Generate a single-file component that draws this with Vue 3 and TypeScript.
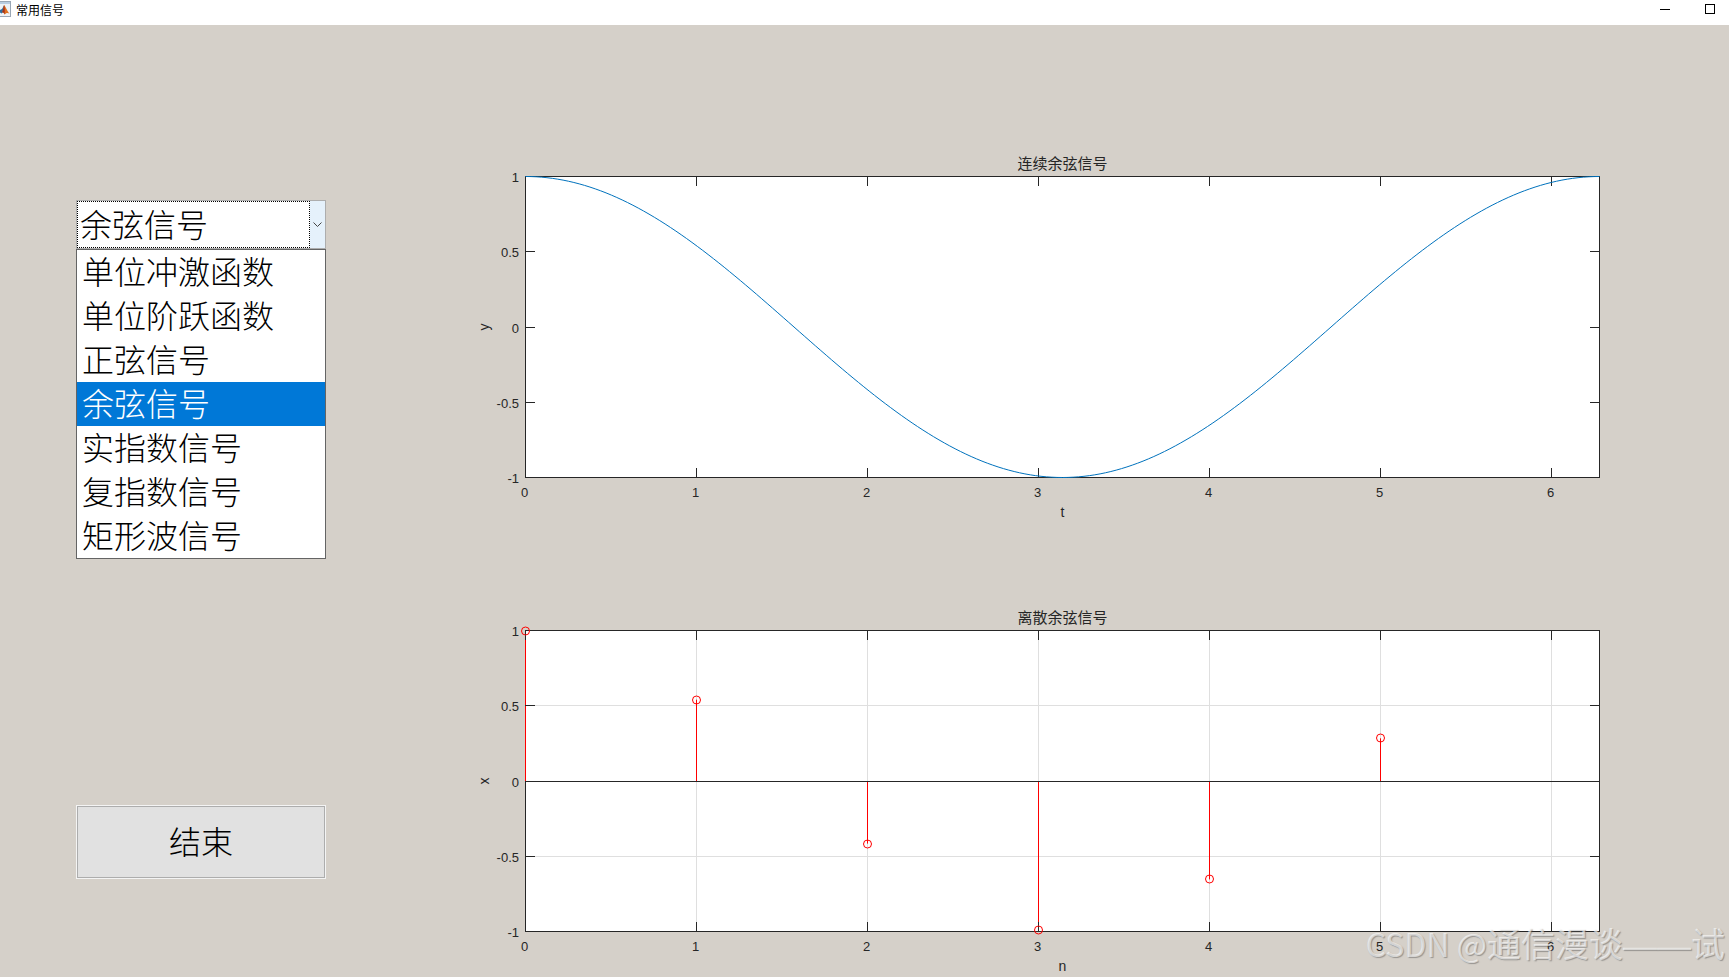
<script setup lang="ts">
import { computed, onBeforeUnmount, onMounted, ref } from 'vue'

interface Chart {
  id: string
  title: string
  xLabel: string
  yLabel: string
  discrete: boolean
}

const signals = [
  '单位冲激函数',
  '单位阶跃函数',
  '正弦信号',
  '余弦信号',
  '实指数信号',
  '复指数信号',
  '矩形波信号',
]
const selected = ref('余弦信号')

const charts: Chart[] = [
  { id: 'continuous', title: '连续余弦信号', xLabel: 't', yLabel: 'y', discrete: false },
  { id: 'discrete', title: '离散余弦信号', xLabel: 'n', yLabel: 'x', discrete: true },
]

const X_MAX = Math.PI * 2
const TICK = 10
const xTicks = [0, 1, 2, 3, 4, 5, 6]
const yTicks = [1, 0.5, 0, -0.5, -1]
const samples = [0, 1, 2, 3, 4, 5]

const plots = ref<SVGSVGElement[]>([])
const width = ref(1075)
const height = ref(302)

// Lines are centred on half pixels so that one-pixel strokes stay sharp.
const right = computed(() => width.value - 0.5)
const bottom = computed(() => height.value - 0.5)
const rawX = (v: number) => 0.5 + (v / X_MAX) * (width.value - 1)
const rawY = (v: number) => 0.5 + ((1 - v) / 2) * (height.value - 1)
const px = (v: number) => Math.floor(rawX(v)) + 0.5
const py = (v: number) => Math.floor(rawY(v)) + 0.5

const curve = computed(() =>
  Array.from({ length: 201 }, (_, i) => {
    const t = (i / 200) * X_MAX
    return `${rawX(t).toFixed(2)},${rawY(Math.cos(t)).toFixed(2)}`
  }).join(' '),
)

let observer: ResizeObserver | undefined

function measure() {
  const first = plots.value[0]
  if (!first) return
  const box = first.getBoundingClientRect()
  width.value = Math.round(box.width)
  height.value = Math.round(box.height)
}

onMounted(() => {
  measure()
  observer = new ResizeObserver(measure)
  if (plots.value[0]) observer.observe(plots.value[0])
})
onBeforeUnmount(() => observer?.disconnect())
</script>

<template>
  <div class="window" lang="zh-CN">
    <header class="titlebar">
      <svg class="app-icon" width="11" height="16" viewBox="0 0 11 16" aria-hidden="true">
        <rect x="-5" y="0.5" width="15.5" height="15" fill="#eef2f6" stroke="#9aa7b5" />
        <rect x="-5" y="1" width="15" height="2" fill="#b9cde0" />
        <path d="M0 9 L2 8 L4 4.500 L4.500 10 L1.500 12.500 L0 11.500Z" fill="#2f6f9f" />
        <path d="M4 4 C5.500 5 7 10 9.500 12.500 C7.500 11.500 6 12 4.500 13.500 C4 12 3 11 2 11.500 C3.200 9.500 3.600 6 4 4Z" fill="#e0701e" />
        <path d="M4 4 C4.800 6 5 10 4.500 13.500 C4 12 3 11 2 11.500 C3.200 9.500 3.600 6 4 4Z" fill="#a3301c" />
      </svg>
      <h1 class="title">常用信号</h1>
      <div class="controls">
        <button type="button" class="control" aria-label="最小化">
          <svg width="10" height="10" viewBox="0 0 10 10"><path d="M0 5.500H10" stroke="#000" /></svg>
        </button>
        <button type="button" class="control" aria-label="最大化">
          <svg width="10" height="10" viewBox="0 0 10 10">
            <rect x="0.5" y="0.5" width="9" height="9" fill="none" stroke="#000" />
          </svg>
        </button>
      </div>
    </header>

    <main class="body">
      <section class="panel">
        <div class="picker">
          <select v-model="selected" class="select" aria-label="信号类型">
            <option v-for="s in signals" :key="s" :value="s">{{ s }}</option>
          </select>
          <span class="arrow" aria-hidden="true">
            <svg width="9" height="6" viewBox="0 0 9 6">
              <path d="M0.500 0.500L4.500 4.500L8.500 0.500" fill="none" stroke="#444" />
            </svg>
          </span>
          <ul class="list" role="listbox" aria-label="信号列表">
            <li
              v-for="s in signals"
              :key="s"
              class="item"
              :class="{ active: s === selected }"
              role="option"
              :aria-selected="s === selected"
              @click="selected = s"
            >{{ s }}</li>
          </ul>
        </div>
        <button type="button" class="finish">结束</button>
      </section>

      <section class="charts">
        <figure v-for="c in charts" :key="c.id" class="chart">
          <figcaption class="caption">{{ c.title }}</figcaption>
          <svg ref="plots" class="plot" role="img" :aria-label="c.title">
            <rect class="box" x="0.5" y="0.5" :width="width - 1" :height="height - 1" />

            <g v-if="c.discrete" class="grid">
              <line v-for="v in xTicks.slice(1)" :key="'gx' + v" :x1="px(v)" y1="1" :x2="px(v)" :y2="bottom" />
              <line v-for="v in [0.5, -0.5]" :key="'gy' + v" x1="1" :y1="py(v)" :x2="right" :y2="py(v)" />
            </g>

            <g v-if="c.discrete" class="stems">
              <line v-for="n in samples" :key="'s' + n" :x1="px(n)" :y1="py(0)" :x2="px(n)" :y2="rawY(Math.cos(n))" />
            </g>

            <g class="axis">
              <line v-if="c.discrete" x1="0" :y1="py(0)" :x2="right" :y2="py(0)" />
              <template v-for="v in xTicks" :key="'tx' + v">
                <line :x1="px(v)" y1="0" :x2="px(v)" :y2="TICK" />
                <line :x1="px(v)" :y1="height" :x2="px(v)" :y2="height - TICK" />
              </template>
              <template v-for="v in yTicks" :key="'ty' + v">
                <line x1="0" :y1="py(v)" :x2="TICK" :y2="py(v)" />
                <line :x1="width" :y1="py(v)" :x2="width - TICK" :y2="py(v)" />
              </template>
            </g>

            <g v-if="c.discrete" class="markers">
              <circle v-for="n in samples" :key="'m' + n" :cx="px(n)" :cy="Math.round(rawY(Math.cos(n)))" r="4" />
            </g>
            <polyline v-else class="curve" :points="curve" />

            <text v-for="v in xTicks" :key="'lx' + v" class="tick mid" :x="px(v) - 1" :y="height + 19">{{ v }}</text>
            <text v-for="v in yTicks" :key="'ly' + v" class="tick end" x="-6" :y="Math.floor(rawY(v)) + 6">{{ v }}</text>
            <text class="label mid" :x="width / 2" :y="height + 39">{{ c.xLabel }}</text>
            <text class="label mid" :transform="`translate(-36 ${height / 2}) rotate(-90)`">{{ c.yLabel }}</text>
          </svg>
        </figure>
      </section>
    </main>

    <div class="watermark"><span class="latin">CSDN @</span>通信漫谈<span class="dash">——</span>试</div>
  </div>
</template>

<style>
body {
  background: #d5d0c9;
}
</style>

<style scoped>
.window {
  position: relative;
  display: flex;
  flex-direction: column;
  min-height: 100vh;
  overflow: hidden;
  background: #d5d0c9;
  color: #000;
  font-family: "Liberation Sans", "Noto Sans CJK SC", sans-serif;
}

.titlebar {
  display: flex;
  align-items: flex-start;
  box-sizing: border-box;
  height: 25px;
  padding-top: 1px;
  background: #fff;
}

.app-icon {
  flex: none;
}

.title {
  margin: 0 0 0 5px;
  font-family: "Noto Sans CJK SC", sans-serif;
  font-size: 12px;
  font-weight: 400;
  line-height: 17px;
}

.controls {
  display: flex;
  gap: 35px;
  margin-left: auto;
  padding: 3px 14px 0 0;
}

.control {
  display: block;
  width: 10px;
  height: 10px;
  padding: 0;
  border: 0;
  background: none;
}

.control svg {
  display: block;
}

.body {
  display: flex;
  flex: 1;
}

.panel {
  display: flex;
  flex: none;
  flex-direction: column;
  justify-content: space-between;
  box-sizing: border-box;
  width: 250px;
  margin-left: 76px;
  padding: 175px 0 98px;
}

.picker {
  position: relative;
  height: 49px;
  box-sizing: border-box;
  display: flex;
  border: 1px solid #adadad;
  background: #fff;
}

.select {
  flex: 1;
  min-width: 0;
  padding: 0 0 4px 2px;
  border: 1px dotted #000;
  border-radius: 0;
  outline: 0;
  appearance: none;
  background: #fff;
  color: #000;
  font: 300 32px/40px "Noto Sans CJK SC", sans-serif;
}

.arrow {
  display: flex;
  align-items: center;
  justify-content: center;
  width: 15px;
  background: #e5f1fb;
  pointer-events: none;
}

.list {
  position: absolute;
  z-index: 1;
  top: 48px;
  left: -1px;
  right: -1px;
  margin: 0;
  padding: 0;
  border: 1px solid #646464;
  background: #fff;
  list-style: none;
}

.item {
  padding: 0 0 4px 5px;
  font: 300 32px/40px "Noto Sans CJK SC", sans-serif;
  white-space: nowrap;
}

.item.active {
  background: #0078d7;
  color: #fff;
}

.finish {
  height: 74px;
  padding: 0 0 4px;
  border: 1px solid #f4f4f4;
  border-radius: 0;
  background: #e1e1e1;
  box-shadow: inset 0 0 0 1px #adadad;
  color: #000;
  font: 300 32px/40px "Noto Sans CJK SC", sans-serif;
}

.charts {
  display: flex;
  flex: 1;
  flex-direction: column;
  gap: 86px;
  min-width: 0;
  padding: 130px 129px 0 199px;
}

.chart {
  display: flex;
  flex: 1;
  flex-direction: column;
  margin: 0;
  padding-bottom: 45px;
}

.caption {
  height: 21px;
  color: #262626;
  font: 400 15px/16px "Noto Sans CJK SC", sans-serif;
  text-align: center;
}

.plot {
  display: block;
  flex: 1;
  width: 100%;
  min-height: 200px;
  overflow: visible;
}

.box {
  fill: #fff;
  stroke: #262626;
}

.grid line {
  stroke: #dfdfdf;
}

.stems line {
  stroke: #f00;
}

.axis line {
  stroke: #262626;
}

.markers circle {
  fill: none;
  stroke: #f00;
}

.curve {
  fill: none;
  stroke: #0072bd;
}

.tick {
  fill: #262626;
  font-size: 13px;
}

.label {
  fill: #262626;
  font-size: 14px;
}

.mid {
  text-anchor: middle;
}

.end {
  text-anchor: end;
}

.watermark {
  position: absolute;
  right: 4px;
  bottom: 10px;
  color: rgba(255, 255, 255, 0.6);
  font: 400 34px/44px "Noto Sans CJK SC", sans-serif;
  text-shadow: 1px 1px 1px rgba(90, 90, 90, 0.5);
  white-space: nowrap;
  pointer-events: none;
}

.latin {
  font-size: 32px;
}

.dash {
  font-family: "Liberation Sans", sans-serif;
}
</style>
